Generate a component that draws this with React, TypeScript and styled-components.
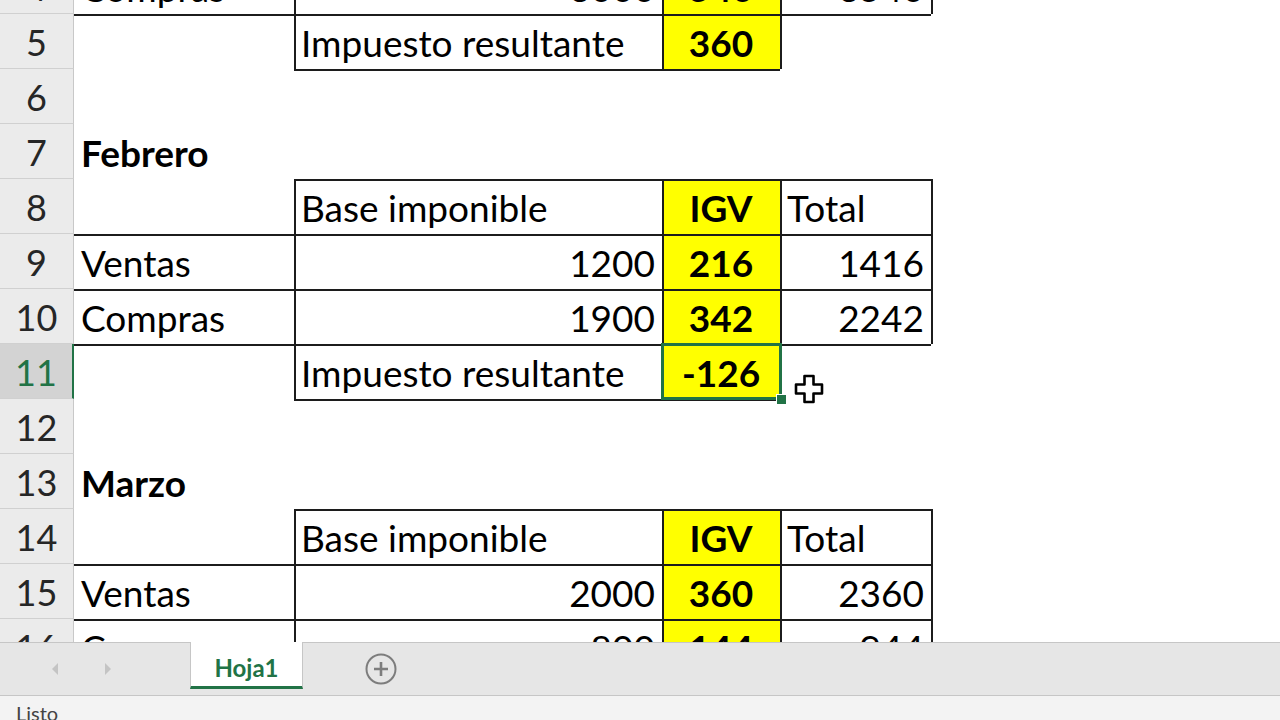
import React from 'react';
import styled, { createGlobalStyle, css } from 'styled-components';

const GlobalStyle = createGlobalStyle`
  html, body { margin: 0; padding: 0; width: 1280px; height: 720px; overflow: hidden; background: #fff; }
  body { font-family: Lato, "Liberation Sans", sans-serif; }
  * { box-sizing: border-box; }
`;

const Window = styled.div`
  display: flex;
  flex-direction: column;
  width: 1280px;
  height: 720px;
`;

const SheetViewport = styled.div`
  position: relative;
  height: 642px;
  overflow: hidden;
  background: #fff;
  flex: none;
`;

const Grid = styled.div`
  display: grid;
  grid-template-columns: 74px 220px 368px 118px 151px 1fr;
  grid-auto-rows: 55px;
  margin-top: -41px;
`;

const RowHeader = styled.div<{ $active?: boolean }>`
  display: flex;
  align-items: flex-end;
  justify-content: center;
  padding-bottom: 8px;
  font-size: 36px;
  line-height: 1;
  color: ${(p) => (p.$active ? '#217346' : '#262626')};
  background: ${(p) => (p.$active ? '#d3d3d3' : '#ebebeb')};
  border-bottom: 1px solid #d0d0d0;
  border-right: ${(p) => (p.$active ? '2px solid #217346' : '1px solid #c8c8c8')};
`;

type Align = 'l' | 'r' | 'c';

const Cell = styled.div<{
  $align?: Align;
  $bold?: boolean;
  $fill?: boolean;
  $top?: boolean;
  $left?: boolean;
  $selected?: boolean;
}>`
  position: relative;
  display: flex;
  align-items: flex-end;
  justify-content: ${(p) => (p.$align === 'r' ? 'flex-end' : p.$align === 'c' ? 'center' : 'flex-start')};
  padding: 0 7px 8px 7px;
  font-size: 37px;
  line-height: 1;
  white-space: nowrap;
  color: #000;
  font-weight: ${(p) => (p.$bold ? 700 : 400)};
  background: ${(p) => (p.$fill ? '#ffff00' : 'transparent')};
  box-shadow: ${(p) => {
    const s: string[] = [];
    if (p.$top) s.push('inset 0 2px 0 #1c1c1c');
    if (p.$left) s.push('inset 2px 0 0 #1c1c1c');
    return s.length ? s.join(', ') : 'none';
  }};
  ${(p) =>
    p.$selected &&
    css`
      z-index: 2;
      &::after {
        content: '';
        position: absolute;
        left: -1px;
        top: -1px;
        right: -2px;
        bottom: -1px;
        border: 3px solid #217346;
      }
    `}
`;

const FillHandle = styled.span`
  position: absolute;
  right: -7px;
  bottom: -6px;
  width: 11px;
  height: 11px;
  background: #217346;
  border: 1px solid #fff;
  z-index: 3;
`;

const Cursor = styled.svg`
  position: absolute;
  left: 794px;
  top: 374px;
  z-index: 4;
`;

const TabBar = styled.div`
  display: flex;
  align-items: stretch;
  height: 54px;
  background: #e6e6e6;
  border-top: 1px solid #c6c6c6;
  border-bottom: 1px solid #c6c6c6;
  flex: none;
`;

const NavArea = styled.div`
  width: 190px;
  display: flex;
  align-items: center;
  padding-left: 50px;
  gap: 43px;
`;

const Tab = styled.div`
  width: 113px;
  height: 47px;
  margin-top: -1px;
  display: flex;
  align-items: center;
  justify-content: center;
  padding-top: 6px;
  background: #fff;
  border-left: 1px solid #c6c6c6;
  border-right: 1px solid #c6c6c6;
  border-bottom: 3px solid #217346;
  color: #217346;
  font-weight: 700;
  font-size: 24px;
`;

const AddArea = styled.div`
  width: 156px;
  display: flex;
  align-items: center;
  justify-content: center;
`;

const StatusBar = styled.div`
  flex: 1;
  background: #f3f3f3;
  padding: 7px 0 0 16px;
  font-size: 20px;
  line-height: 20px;
  color: #444;
  overflow: hidden;
`;

type Spec = { t?: string; a?: Align; b?: boolean; y?: boolean; T?: boolean; L?: boolean; sel?: boolean };

const E: Spec = {};

const rows: { n: number; cells: Spec[] }[] = [
  { n: 4, cells: [{ t: 'Compras', T: true }, { t: '3000', a: 'r', T: true, L: true }, { t: '540', a: 'c', b: true, y: true, T: true, L: true }, { t: '3540', a: 'r', T: true, L: true }, { L: true }] },
  { n: 5, cells: [{ T: true }, { t: 'Impuesto resultante', T: true, L: true }, { t: '360', a: 'c', b: true, y: true, T: true, L: true }, { T: true, L: true }, E] },
  { n: 6, cells: [E, { T: true }, { T: true }, E, E] },
  { n: 7, cells: [{ t: 'Febrero', b: true }, E, E, E, E] },
  { n: 8, cells: [E, { t: 'Base imponible', T: true, L: true }, { t: 'IGV', a: 'c', b: true, y: true, T: true, L: true }, { t: 'Total', T: true, L: true }, { L: true }] },
  { n: 9, cells: [{ t: 'Ventas', T: true }, { t: '1200', a: 'r', T: true, L: true }, { t: '216', a: 'c', b: true, y: true, T: true, L: true }, { t: '1416', a: 'r', T: true, L: true }, { L: true }] },
  { n: 10, cells: [{ t: 'Compras', T: true }, { t: '1900', a: 'r', T: true, L: true }, { t: '342', a: 'c', b: true, y: true, T: true, L: true }, { t: '2242', a: 'r', T: true, L: true }, { L: true }] },
  { n: 11, cells: [{ T: true }, { t: 'Impuesto resultante', T: true, L: true }, { t: '-126', a: 'c', b: true, y: true, T: true, L: true, sel: true }, { T: true, L: true }, E] },
  { n: 12, cells: [E, { T: true }, { T: true }, E, E] },
  { n: 13, cells: [{ t: 'Marzo', b: true }, E, E, E, E] },
  { n: 14, cells: [E, { t: 'Base imponible', T: true, L: true }, { t: 'IGV', a: 'c', b: true, y: true, T: true, L: true }, { t: 'Total', T: true, L: true }, { L: true }] },
  { n: 15, cells: [{ t: 'Ventas', T: true }, { t: '2000', a: 'r', T: true, L: true }, { t: '360', a: 'c', b: true, y: true, T: true, L: true }, { t: '2360', a: 'r', T: true, L: true }, { L: true }] },
  { n: 16, cells: [{ t: 'Compras', T: true }, { t: '800', a: 'r', T: true, L: true }, { t: '144', a: 'c', b: true, y: true, T: true, L: true }, { t: '944', a: 'r', T: true, L: true }, { L: true }] },
];

export default function App() {
  return (
    <Window>
      <GlobalStyle />
      <SheetViewport>
        <Grid>
          {rows.map((r) => (
            <React.Fragment key={r.n}>
              <RowHeader $active={r.n === 11}>{r.n}</RowHeader>
              {r.cells.map((c, i) => (
                <Cell
                  key={i}
                  $align={c.a}
                  $bold={c.b}
                  $fill={c.y}
                  $top={c.T}
                  $left={c.L}
                  $selected={c.sel}
                >
                  {c.t}
                  {c.sel && <FillHandle />}
                </Cell>
              ))}
            </React.Fragment>
          ))}
        </Grid>
        <Cursor width="30" height="30" viewBox="0 0 30 30">
          <path
            d="M10.5 2 H19.5 V10.5 H28 V19.5 H19.5 V28 H10.5 V19.5 H2 V10.5 H10.5 Z"
            fill="#fff"
            stroke="#000"
            strokeWidth="2.6"
            strokeLinejoin="round"
          />
        </Cursor>
      </SheetViewport>
      <TabBar>
        <NavArea>
          <svg width="10" height="14" viewBox="0 0 10 14">
            <path d="M8 1 L2 7 L8 13 Z" fill="#c4c4c4" />
          </svg>
          <svg width="10" height="14" viewBox="0 0 10 14">
            <path d="M2 1 L8 7 L2 13 Z" fill="#c4c4c4" />
          </svg>
        </NavArea>
        <Tab>Hoja1</Tab>
        <AddArea>
          <svg width="34" height="34" viewBox="0 0 34 34">
            <circle cx="17" cy="17" r="14.5" fill="none" stroke="#7d7d7d" strokeWidth="2" />
            <path d="M17 10 V24 M10 17 H24" stroke="#7d7d7d" strokeWidth="2.6" />
          </svg>
        </AddArea>
      </TabBar>
      <StatusBar>Listo</StatusBar>
    </Window>
  );
}
